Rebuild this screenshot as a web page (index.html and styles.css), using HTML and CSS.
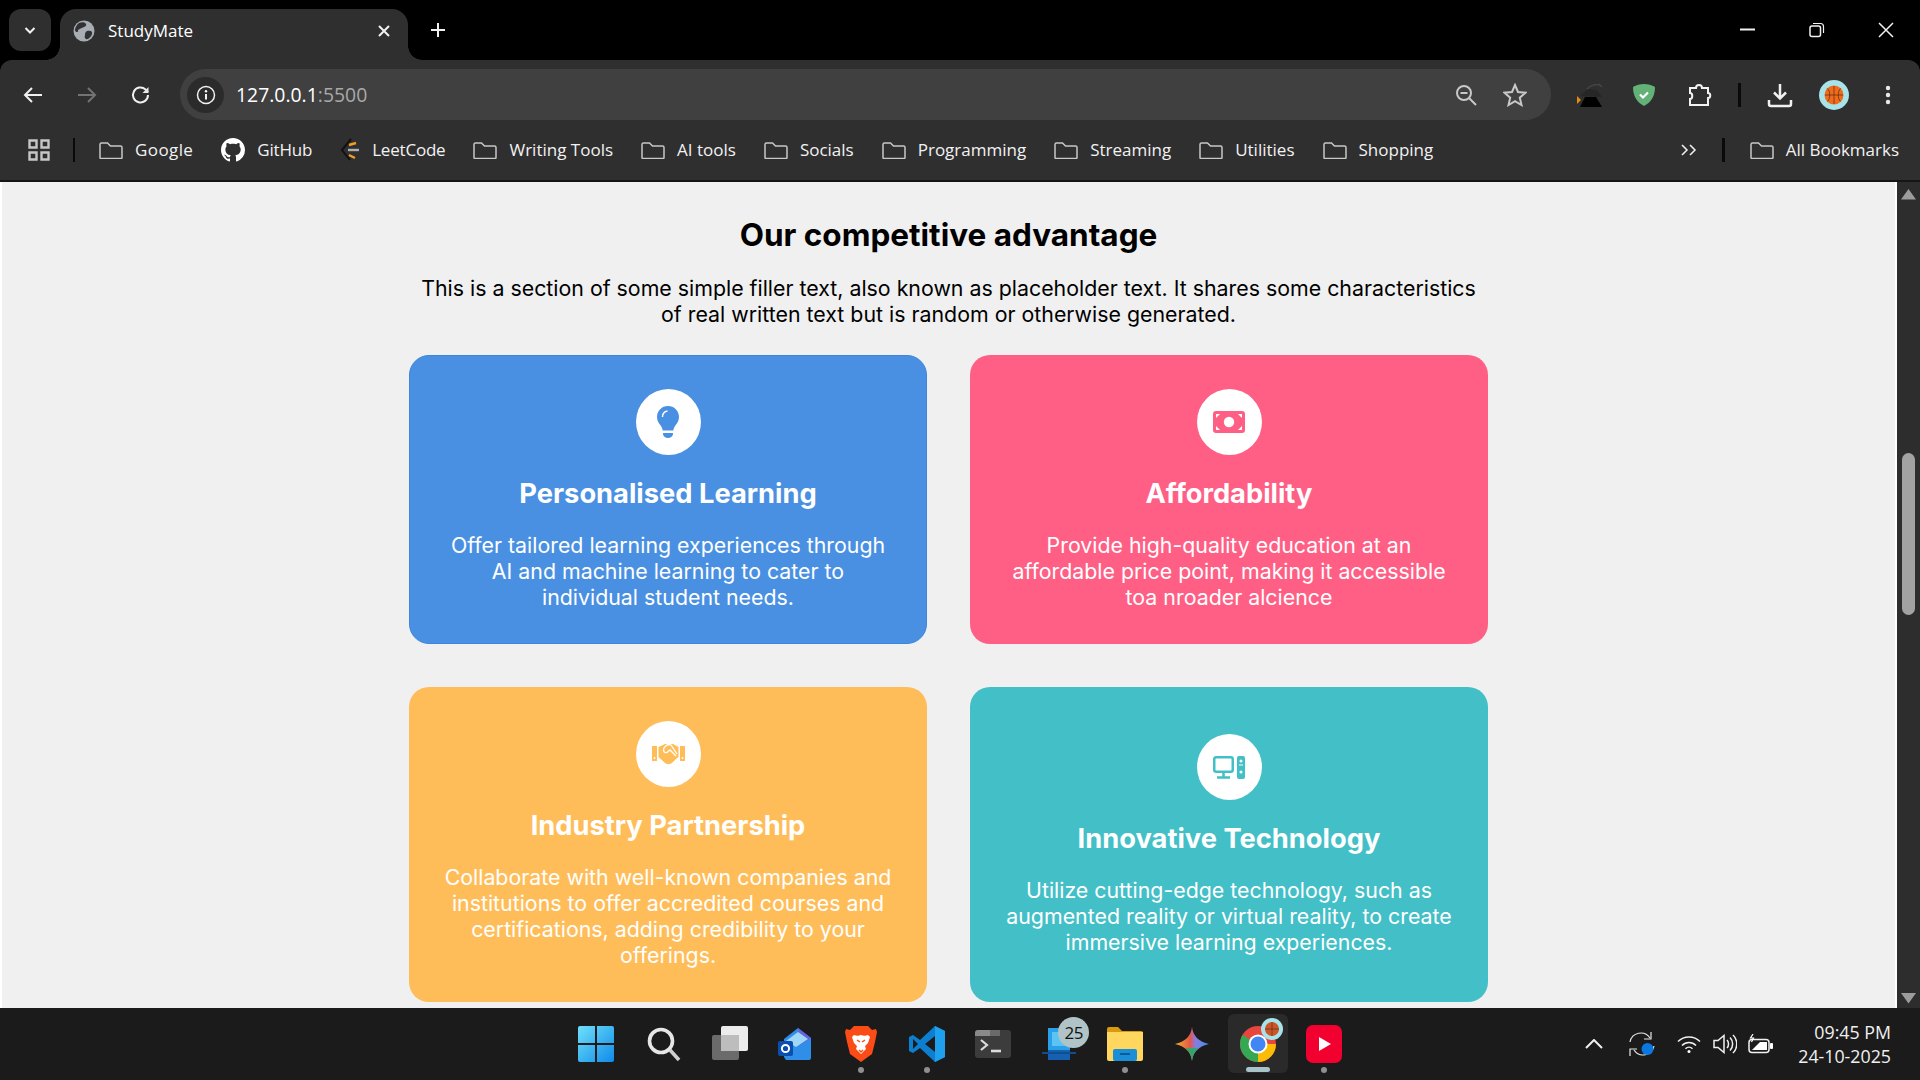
FILE: index.html
```html
<!DOCTYPE html>
<html lang="en">
<head>
<meta charset="utf-8">
<title>StudyMate</title>
<link rel="stylesheet" href="styles.css">
</head>
<body>
<div class="tabstrip">
  <div class="tabsearch"><svg width="14" height="14" viewBox="0 0 14 14"><path d="M2.500 5l4.500 4.500L11.500 5" class="st-w2"/></svg></div>
  <div class="tab">
    <svg class="favicon" width="22" height="22" viewBox="0 0 22 22"><circle cx="11" cy="11" r="10.500" fill="#a8adb3"/><path d="M6 3c3-1 6-1 7 1s-2 3-4 4-4 1-4 3-3 1-3-1 2-6 4-7zM14 11c3-1 6 0 5 3s-4 6-6 5-1-3-1-4 0-3 2-4z" fill="#303134"/></svg>
    <span class="tabtitle">StudyMate</span>
    <svg width="14" height="14" viewBox="0 0 14 14"><path d="M2 2l10 10M12 2L2 12" class="st-w2"/></svg>
  </div>
  <div class="newtab"><svg width="16" height="16" viewBox="0 0 16 16"><path d="M8 1v14M1 8h14" class="st-w2"/></svg></div>
  <div class="winctrls">
    <div class="winbtn"><svg width="16" height="16" viewBox="0 0 16 16"><path d="M0 7.500h15" class="st-w2"/></svg></div>
    <div class="winbtn"><svg width="16" height="16" viewBox="0 0 16 16"><rect x="1" y="4" width="10.500" height="10.500" rx="2" class="st-w15"/><path d="M4 1.500h7.500A3 3 0 0 1 14.500 4.500V11" class="st-w1"/></svg></div>
    <div class="winbtn"><svg width="16" height="16" viewBox="0 0 16 16"><path d="M1 1l14 14M15 1L1 15" class="st-w15"/></svg></div>
  </div>
</div>

<div class="chrome">
  <div class="navrow">
    <div class="iconbtn"><svg width="20" height="18" viewBox="0 0 20 18"><path d="M19 9H2M9 2L2 9l7 7" class="st-w2"/></svg></div>
    <div class="iconbtn"><svg width="20" height="18" viewBox="0 0 20 18"><path d="M1 9h17M11 2l7 7-7 7" class="st-dim"/></svg></div>
    <div class="iconbtn"><svg width="20" height="20" viewBox="0 0 20 20"><path d="M17 10a7.500 7.500 0 1 1-2.500-5.600L17 7" class="st-w2"/><path d="M17.500 2v6h-6z" fill="#e8eaed"/></svg></div>
    <div class="omnibox">
      <div class="infochip"><svg width="20" height="20" viewBox="0 0 20 20"><circle cx="10" cy="10" r="8.500" class="st-w15"/><path d="M10 9v5.500" class="st-w2"/><circle cx="10" cy="6.200" r="1.200" fill="#fff"/></svg></div>
      <span class="url">127.0.0.1<span class="port">:5500</span></span>
      <div class="omniend">
        <svg width="22" height="22" viewBox="0 0 22 22"><circle cx="9" cy="9" r="7" class="st-g"/><path d="M5.500 9h7" class="st-g"/><path d="M14 14l7 7" class="st-g"/></svg>
        <svg width="24" height="24" viewBox="0 0 24 24"><path d="M12 2l3 7 7.500.7-5.700 5 1.700 7.300-6.500-3.900-6.500 3.900 1.700-7.300-5.700-5L9 9z" class="st-g"/></svg>
      </div>
    </div>
    <div class="tools">
      <div class="iconbtn"><svg width="27" height="26" viewBox="0 0 27 26"><path d="M3 14l8-7 9 1 5 7z" fill="#262626"/><path d="M3 25l5-10h11l6 10z" fill="#000"/><path d="M0 14l4 4-4 4z" fill="#e58a12"/><path d="M10 7c4-4 8-5 13-4M22 2l3 3" stroke="#484848" stroke-width="1.200" fill="none"/></svg></div>
      <div class="iconbtn"><svg width="24" height="24" viewBox="0 0 24 24"><path d="M12 1c4 0 8 1 11 3 0 8-3 15-11 19C4 19 1 12 1 4c3-2 7-3 11-3z" fill="#63b177"/><path d="M8 11.500l3 3 5-5" stroke="#fff" stroke-width="2.200" fill="none"/></svg></div>
      <div class="iconbtn ext"><svg width="24" height="24" viewBox="0 0 24 24"><path d="M2 5h6c0-4 6-4 6 0h6v5c3 0 3 5 0 5v7H2v-6c3 0 3-6 0-6z" class="st-w2"/></svg></div>
      <div class="divider"></div>
      <div class="iconbtn"><svg width="26" height="26" viewBox="0 0 26 26"><path d="M13 2v14M7 10.500l6 6 6-6" class="st-w25"/><path d="M2 18v4a2 2 0 0 0 2 2h18a2 2 0 0 0 2-2v-4" class="st-w25"/></svg></div>
      <div class="iconbtn"><svg width="30" height="30" viewBox="0 0 30 30"><circle cx="15" cy="15" r="15" fill="#a7e3e8"/><circle cx="15" cy="15" r="9.500" fill="#ef6c1d"/><path d="M6 15h18M15 6v18M8.500 8.500c3 3 3 10 0 13M21.500 8.500c-3 3-3 10 0 13" stroke="#5a2a10" stroke-width=".7" fill="none"/></svg></div>
      <div class="iconbtn"><svg width="6" height="20" viewBox="0 0 6 20"><circle cx="3" cy="3" r="2.200" fill="#e8eaed"/><circle cx="3" cy="10" r="2.200" fill="#e8eaed"/><circle cx="3" cy="17" r="2.200" fill="#e8eaed"/></svg></div>
    </div>
  </div>
  <div class="bookmarks">
    <svg class="apps" width="22" height="22" viewBox="0 0 22 22"><path d="M1.500 1.500h7v7h-7zM13.500 1.500h7v7h-7zM1.500 13.500h7v7h-7zM13.500 13.500h7v7h-7z" class="st-g2"/></svg>
    <div class="bmdiv"></div>
    <div class="bmlist">
      <div class="bm"><svg class="folder" viewBox="0 0 24 17"><use href="#folder"/></svg><span class="wide">Google</span></div>
      <div class="bm"><svg width="24" height="24" viewBox="0 0 16 16"><path fill="#fff" d="M8 0C3.580 0 0 3.580 0 8c0 3.540 2.290 6.530 5.470 7.590.4.070.55-.17.55-.38 0-.19-.01-.82-.01-1.490-2.010.37-2.530-.49-2.690-.94-.09-.23-.48-.94-.82-1.130-.28-.15-.68-.52-.01-.53.63-.01 1.080.58 1.230.82.720 1.210 1.870.87 2.330.66.070-.52.280-.87.510-1.070-1.780-.2-3.640-.89-3.640-3.950 0-.87.310-1.590.82-2.150-.08-.2-.36-1.020.08-2.120 0 0 .67-.21 2.200.82.640-.18 1.320-.27 2-.27s1.360.09 2 .27c1.530-1.040 2.200-.82 2.200-.82.440 1.100.16 1.920.08 2.120.51.560.82 1.270.82 2.150 0 3.070-1.870 3.750-3.650 3.950.29.250.54.730.54 1.480 0 1.070-.01 1.930-.01 2.200 0 .21.150.46.550.38A8.010 8.010 0 0 0 16 8c0-4.420-3.580-8-8-8z"/></svg><span class="tight">GitHub</span></div>
      <div class="bm"><svg width="20" height="24" viewBox="0 0 20 24"><path d="M11 1L2 12l8 10" stroke="#111" stroke-width="2" fill="none"/><path d="M9 7l7-2M9 17l6 3" stroke="#f0a020" stroke-width="2.400"/><path d="M8 12h11" stroke="#b0b0b0" stroke-width="2.400"/></svg><span class="tight">LeetCode</span></div>
      <div class="bm"><svg class="folder" viewBox="0 0 24 17"><use href="#folder"/></svg><span>Writing Tools</span></div>
      <div class="bm"><svg class="folder" viewBox="0 0 24 17"><use href="#folder"/></svg><span>AI tools</span></div>
      <div class="bm"><svg class="folder" viewBox="0 0 24 17"><use href="#folder"/></svg><span>Socials</span></div>
      <div class="bm"><svg class="folder" viewBox="0 0 24 17"><use href="#folder"/></svg><span>Programming</span></div>
      <div class="bm"><svg class="folder" viewBox="0 0 24 17"><use href="#folder"/></svg><span>Streaming</span></div>
      <div class="bm"><svg class="folder" viewBox="0 0 24 17"><use href="#folder"/></svg><span>Utilities</span></div>
      <div class="bm"><svg class="folder" viewBox="0 0 24 17"><use href="#folder"/></svg><span>Shopping</span></div>
    </div>
    <svg class="more" width="16" height="12" viewBox="0 0 16 12"><path d="M1 1l5 5-5 5M9 1l5 5-5 5" class="st-w15"/></svg>
    <div class="bmdiv2"></div>
    <div class="bm"><svg class="folder" viewBox="0 0 24 17"><use href="#folder"/></svg><span>All Bookmarks</span></div>
  </div>
</div>

<svg class="defs" width="0" height="0"><defs><path id="folder" d="M1 2.500A1.500 1.500 0 0 1 2.500 1h6l3 3H21.500A1.500 1.500 0 0 1 23 5.500v10a1 1 0 0 1-1 1H2a1 1 0 0 1-1-1z" fill="none" stroke="#c7c7c7" stroke-width="1.500"/></defs></svg>

<div class="viewport">
  <main class="page">
    <h2 class="heading">Our competitive advantage</h2>
    <p class="lead">This is a section of some simple filler text, also known as placeholder text. It shares some characteristics of real written text but is random or otherwise generated.</p>
    <div class="grid">
      <article class="card blue">
        <div class="circle"><svg width="22" height="32" viewBox="0 0 22 32"><path d="M11 0C4.900 0 0 4.900 0 11c0 4 2 6.500 4 9 1 1.500 1.500 3 1.700 4.500h10.600c.2-1.500.7-3 1.700-4.500 2-2.500 4-5 4-9C22 4.900 17.100 0 11 0z" fill="#4a90e2"/><path d="M6 27h10v1a5 4 0 0 1-10 0z" fill="#4a90e2"/><path d="M5.500 11c0-3 2-5.500 5-6" stroke="#fff" stroke-width="1.400" fill="none"/></svg></div>
        <h3>Personalised Learning</h3>
        <p>Offer tailored learning experiences through AI and machine learning to cater to individual student needs.</p>
      </article>
      <article class="card pink">
        <div class="circle"><svg width="32" height="22" viewBox="0 0 32 22"><rect width="32" height="22" rx="3" fill="#ff5f85"/><circle cx="16" cy="11" r="5.200" fill="#fff"/><path d="M3 3h4l-4 4zM29 3h-4l4 4zM3 19h4l-4-4zM29 19h-4l4-4z" fill="#fff"/></svg></div>
        <h3>Affordability</h3>
        <p>Provide high-quality education at an affordable price point, making it accessible toa nroader alcience</p>
      </article>
      <article class="card amber">
        <div class="circle"><svg width="33" height="22" viewBox="0 0 33 22"><path d="M0 3h5v15H0zM28 3h5v15h-5z" fill="#ffbd59"/><path d="M6.500 4L13 1h8l5.500 3v10l-2.500 2-3 3c-3 3-6 2.500-8 1l-6.500-6z" fill="#ffbd59"/><path d="M12 5c2-3 5-4 7-3l6 9M12 5c-1 3 0 5 3 4.500l3-2.500 6 6" stroke="#fff" stroke-width="1.300" fill="none"/><circle cx="2.500" cy="15" r=".9" fill="#fff"/><circle cx="30.500" cy="15" r=".9" fill="#fff"/></svg></div>
        <h3>Industry Partnership</h3>
        <p>Collaborate with well-known companies and institutions to offer accredited courses and certifications, adding credibility to your offerings.</p>
      </article>
      <article class="card teal">
        <div class="circle"><svg width="32" height="23" viewBox="0 0 32 23"><rect x="1.250" y="1.250" width="18.500" height="14.500" rx="2" fill="none" stroke="#43bfc7" stroke-width="2.500"/><path d="M10.500 17v4M4 21.500h13" stroke="#43bfc7" stroke-width="2.500"/><rect x="24" y="0" width="8" height="23" rx="2" fill="#43bfc7"/><circle cx="28" cy="5" r="1.500" fill="#fff"/><circle cx="28" cy="16" r="1.500" fill="#fff"/><path d="M26 9h4" stroke="#fff"/></svg></div>
        <h3>Innovative Technology</h3>
        <p>Utilize cutting-edge technology, such as augmented reality or virtual reality, to create immersive learning experiences.</p>
      </article>
    </div>
  </main>
  <div class="scrollbar">
    <svg width="15" height="11" viewBox="0 0 15 11"><path d="M7.500 0L15 10.500H0z" fill="#9c9c9c"/></svg>
    <div class="track"><div class="thumb"></div></div>
    <svg width="15" height="11" viewBox="0 0 15 11"><path d="M7.500 10.500L15 0H0z" fill="#9c9c9c"/></svg>
  </div>
</div>

<footer class="taskbar">
  <div></div>
  <div class="apps-row">
    <div class="tb"><svg width="36" height="36" viewBox="0 0 36 36"><defs><linearGradient id="w" x1="0" y1="0" x2="1" y2="1"><stop offset="0" stop-color="#6fe0fb"/><stop offset="1" stop-color="#0f8be8"/></linearGradient></defs><path d="M0 2a2 2 0 0 1 2-2h15v17H0zM19 0h15a2 2 0 0 1 2 2v15H19zM0 19h17v17H2a2 2 0 0 1-2-2zM19 19h17v15a2 2 0 0 1-2 2H19z" fill="url(#w)"/></svg></div>
    <div class="tb nudge"><svg width="34" height="34" viewBox="0 0 34 34"><circle cx="14" cy="14" r="11.500" fill="none" stroke="#e6e6e6" stroke-width="3.600"/><path d="M23 23l9 10" stroke="#cfcfcf" stroke-width="3.600"/></svg></div>
    <div class="tb nudge"><svg width="36" height="36" viewBox="0 0 36 36"><rect x="0" y="9" width="27" height="25" rx="2" fill="#6b6b6b"/><rect x="9" y="0" width="27" height="25" rx="2" fill="#ececec"/><rect x="9" y="9" width="18" height="16" fill="#bdbdbd"/></svg></div>
    <div class="tb"><svg width="34" height="34" viewBox="0 0 34 34"><path d="M6 12L20 1l13 10v20a2 2 0 0 1-2 2H8l-2-3z" fill="#2f8fe8"/><path d="M20 1l13 10-11 7z" fill="#6b5fe0"/><path d="M8 14l12-9 10 7-12 8z" fill="#9fd8f7"/><rect x="0" y="14" width="15" height="15" rx="2" fill="#0a4fb0"/><circle cx="7.500" cy="21.500" r="3.600" fill="none" stroke="#fff" stroke-width="2"/></svg></div>
    <div class="tb"><svg width="32" height="36" viewBox="0 0 32 36"><path d="M9 0h14l4 4 4-1 1 3-2 10-3 12-11 8-11-8L2 16 0 6l1-3 4 1z" fill="#fb4c17"/><path d="M9 9c3 1 4 1 7 0 3 1 4 1 7 0l2 2-2 6-3 3 1 3-5 5-5-5 1-3-3-3-2-6z" fill="#fff"/><path d="M12 14l3 2M20 14l-3 2M14 24l2 2 2-2" stroke="#fb4c17" stroke-width="1.500" fill="none"/></svg><i class="dot"></i></div>
    <div class="tb"><svg width="36" height="36" viewBox="0 0 36 36"><path d="M26 0l10 5v26l-10 5-15-14-7 5-4-2V11l4-2 7 5z" fill="#0d7fd0"/><path d="M26 0l10 5v26l-10 5z" fill="#1fa0ed"/><path d="M26 10v16l-10-8z" fill="#1b1b1b"/><path d="M4 13l5 5-5 5z" fill="#1b1b1b"/></svg><i class="dot"></i></div>
    <div class="tb"><svg width="36" height="28" viewBox="0 0 36 28"><rect width="36" height="28" rx="3" fill="#3c3c3c"/><path d="M0 3a3 3 0 0 1 3-3h12v6H0z" fill="#8a8a8a"/><path d="M15 0h10v6H15z" fill="#6a6a6a"/><path d="M6 10l6 5-6 5" stroke="#dcdcdc" stroke-width="2.200" fill="none"/><path d="M16 21h10" stroke="#dcdcdc" stroke-width="2.600"/></svg></div>
    <div class="tb"><svg width="34" height="32" viewBox="0 0 34 32"><rect x="6" y="0" width="22" height="32" fill="#1560b0"/><rect x="6" y="0" width="22" height="22" fill="#2aa0e8"/><rect x="10" y="4" width="14" height="14" fill="#5cc3f2"/><path d="M0 24h34v2H0z" fill="#0f4e90"/></svg><span class="badge">25</span></div>
    <div class="tb"><svg width="36" height="34" viewBox="0 0 36 34"><path d="M0 2a2 2 0 0 1 2-2h9l4 4h19a2 2 0 0 1 2 2v4H0z" fill="#d99a0c"/><path d="M0 5h36v27a2 2 0 0 1-2 2H2a2 2 0 0 1-2-2z" fill="#ffd75e"/><rect x="6" y="22" width="24" height="12" rx="2" fill="#1a8fd8"/><rect x="13" y="26" width="10" height="2" fill="#0b5a9a"/></svg><i class="dot"></i></div>
    <div class="tb"><svg width="34" height="34" viewBox="0 0 34 34"><defs><linearGradient id="g" x1="0" y1="0" x2="1" y2="0"><stop offset="0" stop-color="#f6b026"/><stop offset=".45" stop-color="#e2574c"/><stop offset=".6" stop-color="#8a7be0"/><stop offset="1" stop-color="#3f8ff0"/></linearGradient></defs><path d="M17 0c1 9 7 15 17 17-10 2-16 8-17 17-1-9-7-15-17-17 10-2 16-8 17-17z" fill="url(#g)"/><path d="M10 21c4 2 6 7 7 13 1-6 3-11 7-13z" fill="#2fa86a"/></svg></div>
    <div class="tb active"><svg width="36" height="36" viewBox="0 0 36 36"><circle cx="18" cy="18" r="18" fill="#e8453c"/><path d="M18 18L2.500 9A18 18 0 0 0 18 36z" fill="#34a853"/><path d="M18 18h18a18 18 0 0 1-18 18z" fill="#fbbc05"/><circle cx="18" cy="18" r="9.500" fill="#fff"/><circle cx="18" cy="18" r="7.500" fill="#4285f4"/></svg><svg class="overlay" width="22" height="22" viewBox="0 0 22 22"><circle cx="11" cy="11" r="11" fill="#a7e3e8"/><circle cx="11" cy="11" r="7" fill="#c9572a"/><path d="M4 11h14M11 4v14" stroke="#7a3010" stroke-width=".8"/></svg><i class="bar"></i></div>
    <div class="tb"><svg width="36" height="38" viewBox="0 0 36 38"><rect width="36" height="38" rx="7" fill="#f2002f"/><path d="M13 12l12 7-12 7z" fill="#fff"/></svg><i class="dot"></i></div>
  </div>
  <div class="tray">
    <div class="t1"><svg width="18" height="10" viewBox="0 0 18 10"><path d="M1 9l8-8 8 8" class="st-w2"/></svg></div>
    <div class="t2"><svg width="26" height="26" viewBox="0 0 26 26"><path d="M1 11a11 11 0 0 1 20-4M25 15a11 11 0 0 1-20 4" stroke="#e8e8e8" stroke-width="1.200" fill="none"/><path d="M22 1v7h-7M1 25v-7h7" stroke="#e8e8e8" stroke-width="1.200" fill="none"/><circle cx="18.500" cy="18" r="6" fill="#0a78e0"/></svg></div>
    <div class="t3"><svg width="24" height="18" viewBox="0 0 24 18"><path d="M1 6.500c6-6 16-6 22 0M5 10.500c4-4 10-4 14 0M8.500 13.800c2-2 5-2 7 0" class="st-w15"/><circle cx="12" cy="16.500" r="1.500" fill="#fff"/></svg></div>
    <div class="t3"><svg width="24" height="20" viewBox="0 0 24 20"><path d="M1 6.500h4l6-5v17l-6-5H1z" class="st-w15"/><path d="M14 6c2 2 2 6 0 8M17 3.500c3.500 3.500 3.500 9.500 0 13M20 1c5 5 5 13 0 18" class="st-w15"/></svg></div>
    <div class="t3"><svg width="26" height="20" viewBox="0 0 26 20"><rect x="1" y="5.500" width="20" height="13" rx="3" class="st-w15"/><path d="M4 16l8-8h7v8z" fill="#fff"/><rect x="22" y="9" width="3" height="6" rx="1" fill="#fff"/><path d="M5 0L2.500 4h3L3.500 8" stroke="#fff" stroke-width="1.200" fill="none"/></svg></div>
    <div class="clock"><span>09:45 PM</span><span>24-10-2025</span></div>
  </div>
</footer>
</body>
</html>
```

FILE: styles.css
```css
* { box-sizing: border-box; }
html, body { margin: 0; height: 100%; }
body {
  width: 1920px;
  height: 1080px;
  overflow: hidden;
  display: flex;
  flex-direction: column;
  background: #000;
  font-family: "Open Sans", "Noto Sans", sans-serif;
  color: #fff;
}
.st-w2 { fill: none; stroke: #f1f1f1; stroke-width: 2; }
.st-w25 { fill: none; stroke: #f1f1f1; stroke-width: 2.500; }
.st-w15 { fill: none; stroke: #f1f1f1; stroke-width: 1.500; }
.st-w1 { fill: none; stroke: #f1f1f1; stroke-width: 1.200; }
.st-dim { fill: none; stroke: #737373; stroke-width: 2; }
.st-g { fill: none; stroke: #c8c8c8; stroke-width: 2; }
.st-g2 { fill: none; stroke: #c7c7c7; stroke-width: 2.400; }
.defs { position: absolute; }

/* tab strip */
.tabstrip {
  height: 60px;
  flex: none;
  display: flex;
  align-items: flex-start;
  padding: 9px 0 0 9px;
  background: #000;
}
.tabsearch {
  width: 42px;
  height: 42px;
  margin-right: 9px;
  border-radius: 12px;
  background: #2f2f2f;
  display: flex;
  align-items: center;
  justify-content: center;
}
.tab {
  position: relative;
  width: 348px;
  height: 51px;
  background: #2f2f2f;
  border-radius: 16px 16px 0 0;
  display: flex;
  align-items: center;
  padding: 0 17px 8px 13px;
}
.tab::before, .tab::after {
  content: "";
  position: absolute;
  bottom: 0;
  width: 14px;
  height: 14px;
}
.tab::before { left: -14px; background: radial-gradient(circle at 0 0, transparent 13.500px, #2f2f2f 14px); }
.tab::after { right: -14px; background: radial-gradient(circle at 100% 0, transparent 13.500px, #2f2f2f 14px); }
.favicon { margin-right: 13px; }
.tabtitle { flex: 1; font-size: 17px; }
.newtab { width: 28px; height: 42px; margin-left: 16px; display: flex; align-items: center; justify-content: center; }
.winctrls { margin-left: auto; display: flex; padding-top: 4px; }
.winbtn { width: 69px; height: 34px; display: flex; align-items: center; justify-content: center; }

/* toolbar */
.chrome {
  height: 122px;
  flex: none;
  background: #2f2f2f;
  border-radius: 12px 12px 0 0;
  border-bottom: 2px solid #151515;
  display: flex;
  flex-direction: column;
}
.navrow {
  height: 60px;
  display: flex;
  align-items: flex-start;
  padding: 9px 5px 0 6px;
  flex: none;
}
.iconbtn { width: 54px; height: 51px; display: flex; align-items: center; justify-content: center; flex: none; }
.ext { padding-left: 3px; }
.omnibox {
  flex: 1;
  height: 51px;
  margin-left: 12px;
  background: #404040;
  border-radius: 26px;
  display: flex;
  align-items: center;
  padding: 0 24px 0 7px;
}
.infochip {
  width: 37px;
  height: 36px;
  border-radius: 50%;
  background: #2b2b2b;
  display: flex;
  align-items: center;
  justify-content: center;
  margin-right: 12px;
}
.url { font-size: 19.400px; color: #fff; }
.port { color: #a9a9a9; }
.omniend { margin-left: auto; display: flex; align-items: center; gap: 26px; }
.tools { display: flex; align-items: center; margin-left: 12px; height: 51px; }
.divider { width: 28px; height: 24px; flex: none; background: linear-gradient(#0a0a0a, #0a0a0a) center / 3px 100% no-repeat; }

/* bookmarks */
.bookmarks { height: 60px; flex: none; display: flex; align-items: center; padding: 0 21px 0 28px; font-size: 17px; }
.bookmarks .apps { margin-right: 23px; flex: none; }
.bmdiv { width: 2px; height: 24px; background: #0a0a0a; margin-right: 24px; flex: none; }
.bmlist { display: flex; gap: 28px; flex: 1; align-items: center; }
.bm { display: flex; align-items: center; gap: 12px; white-space: nowrap; color: #f2f2f2; }
.bm span { padding-bottom: 2px; }
.bm .wide { letter-spacing: .4px; }
.bm .tight { letter-spacing: -.2px; }
.folder { width: 24px; height: 17px; flex: none; }
.more { margin-right: 25px; }
.bmdiv2 { width: 3px; height: 24px; background: #0a0a0a; margin-right: 25px; }

/* viewport */
.viewport { flex: 1; min-height: 0; display: flex; overflow: hidden; }
.page {
  flex: 1;
  min-width: 0;
  background: #f0f0f0;
  border-left: 2px solid #fff;
  border-right: 2px solid #fff;
  padding-top: 33px;
  font-family: Inter, "Liberation Sans", sans-serif;
  color: #000;
  display: flex;
  flex-direction: column;
  align-items: center;
  overflow: hidden;
}
.heading { margin: 0 0 21px; font-size: 31.500px; font-weight: 700; line-height: 39px; text-align: center; }
.lead { margin: 0 0 28px; width: 1079px; font-size: 21.350px; line-height: 26px; text-align: center; flex: none; }
.grid { width: 1079px; display: grid; grid-template-columns: 1fr 1fr; gap: 43px; flex: none; }
.card {
  border-radius: 20px;
  padding: 33px;
  border: 1px solid #3d86de;
  color: #fff;
  text-align: center;
  display: flex;
  flex-direction: column;
  align-items: center;
  justify-content: center;
}
.card h3 { margin: 0 0 21.500px; font-size: 27.300px; font-weight: 700; line-height: 35px; }
.card p { margin: 0; font-size: 21.350px; line-height: 26px; }
.circle {
  width: 65px;
  height: 66px;
  flex: none;
  border-radius: 50%;
  background: #fff;
  margin-bottom: 20.500px;
  display: flex;
  align-items: center;
  justify-content: center;
}
.blue { background: #4a90e2; }
.pink { background: #ff5f85; border-color: transparent; }
.amber { background: #ffbd59; border-color: transparent; }
.teal { background: #43bfc7; border-color: transparent; }

.scrollbar {
  width: 23px;
  flex: none;
  background: #2d2d2d;
  display: flex;
  flex-direction: column;
  align-items: center;
  padding: 7px 0 4px;
}
.track { flex: 1; width: 13px; padding-top: 253px; }
.thumb { height: 162px; border-radius: 7px; background: #a2a2a2; }

/* taskbar */
.taskbar {
  height: 72px;
  flex: none;
  background: #1b1b1b;
  display: grid;
  grid-template-columns: 1fr auto 1fr;
  align-items: center;
}
.apps-row { display: flex; }
.tb { position: relative; width: 66.200px; height: 72px; display: flex; align-items: center; justify-content: center; }
.nudge { padding-left: 4px; }
.dot { position: absolute; left: 30px; bottom: 7px; width: 6px; height: 6px; border-radius: 50%; background: #8f8f8f; }
.active::before { content: ""; position: absolute; inset: 6px 3px 7px; background: #2a2a2a; border-radius: 6px; z-index: 0; }
.active svg { position: relative; z-index: 1; }
.active .overlay { position: absolute; left: 36px; top: 10px; z-index: 2; }
.bar { position: absolute; left: 21px; bottom: 8px; width: 24px; height: 5px; border-radius: 3px; background: #a9c3c9; z-index: 2; }
.badge {
  position: absolute;
  left: 32px;
  top: 9px;
  width: 31px;
  height: 31px;
  border-radius: 50%;
  background: #b0c4c8;
  color: #111;
  font-size: 17px;
  line-height: 31px;
  text-align: center;
  letter-spacing: -.5px;
}
.tray { display: flex; align-items: center; justify-content: flex-end; padding-right: 29px; }
.t1, .t2, .t3 { display: flex; align-items: center; justify-content: center; flex: none; }
.t1 { width: 38px; }
.t2 { width: 58px; }
.t3 { width: 36px; }
.clock { margin-left: 19px; display: flex; flex-direction: column; align-items: flex-end; gap: 2px; font-size: 17.800px; line-height: 22px; color: #f0f0f0; }
```
